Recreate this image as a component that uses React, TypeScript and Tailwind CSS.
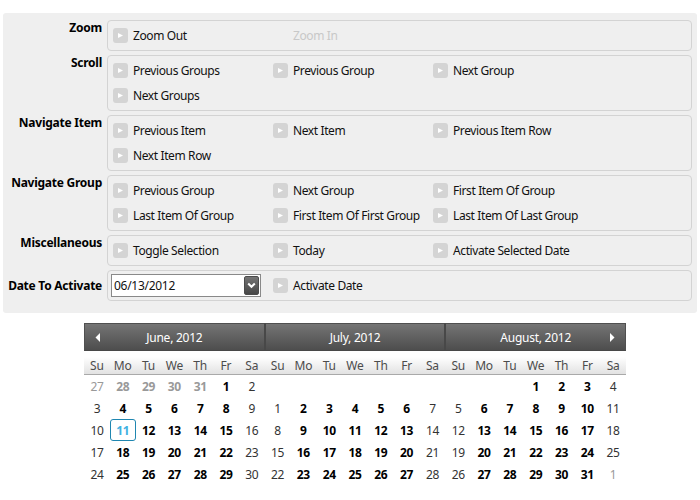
import React from 'react';

type Command = { label: string; disabled?: boolean };
type CommandGroup = { title: string; commands: Command[]; datePicker?: boolean };

const groups: CommandGroup[] = [
  { title: 'Zoom', commands: [{ label: 'Zoom Out' }, { label: 'Zoom In', disabled: true }] },
  { title: 'Scroll', commands: [{ label: 'Previous Groups' }, { label: 'Previous Group' }, { label: 'Next Group' }, { label: 'Next Groups' }] },
  { title: 'Navigate Item', commands: [{ label: 'Previous Item' }, { label: 'Next Item' }, { label: 'Previous Item Row' }, { label: 'Next Item Row' }] },
  {
    title: 'Navigate Group',
    commands: [
      { label: 'Previous Group' },
      { label: 'Next Group' },
      { label: 'First Item Of Group' },
      { label: 'Last Item Of Group' },
      { label: 'First Item Of First Group' },
      { label: 'Last Item Of Last Group' },
    ],
  },
  { title: 'Miscellaneous', commands: [{ label: 'Toggle Selection' }, { label: 'Today' }, { label: 'Activate Selected Date' }] },
  { title: 'Date To Activate', commands: [{ label: 'Activate Date' }], datePicker: true },
];

const weekdays = ['Su', 'Mo', 'Tu', 'We', 'Th', 'Fr', 'Sa'];

// `first` is the number shown in the top-left cell, counted from the 1st of the month.
const months = [
  { name: 'June, 2012', first: -4, length: 30, previousLength: 31, leading: true, trailing: false },
  { name: 'July, 2012', first: -6, length: 28, previousLength: 30, leading: false, trailing: false },
  { name: 'August, 2012', first: -2, length: 31, previousLength: 31, leading: false, trailing: true },
];

function PlayButton() {
  return (
    <span className="flex h-[15px] w-[15px] shrink-0 items-center justify-center rounded-[3px] bg-[#d4d4d4]">
      <svg width="15" height="15" viewBox="0 0 15 15">
        <path d="M5 5 L10 7.5 L5 10 Z" fill="#fff" />
      </svg>
    </span>
  );
}

function CommandItem({ command }: { command: Command }) {
  return (
    <div className="flex h-[25px] w-40 items-center gap-[5px] whitespace-nowrap leading-[17px] tracking-[-0.39px]">
      {command.disabled ? <span className="w-[15px] shrink-0" /> : <PlayButton />}
      <span className={command.disabled ? 'text-[#c8c8c8]' : 'text-[#111]'}>{command.label}</span>
    </div>
  );
}

function DatePicker() {
  return (
    <div className="-ml-0.5 mr-3 mt-px flex h-[23px] w-[150px] items-center justify-between border border-[#898989] bg-white pl-0.5 pr-px">
      <span className="leading-[17px] tracking-[-0.28px] text-[#111]">06/13/2012</span>
      <span className="flex h-[19px] w-[15px] items-center justify-center rounded-[2px] border border-[#4b4b4b] bg-linear-to-b from-[#747474] to-[#474747]">
        <svg width="9" height="7" viewBox="0 0 9 7" className="shrink-0">
          <path d="M1.2 1.5 L4.5 4.8 L7.8 1.5" fill="none" stroke="#fff" strokeWidth="2" />
        </svg>
      </span>
    </div>
  );
}

function dayFor(month: (typeof months)[number], index: number) {
  const n = month.first + index;
  if (n < 1) return month.leading ? { text: n + month.previousLength, faded: true } : null;
  if (n > month.length) return month.trailing ? { text: n - month.length, faded: true } : null;
  return { text: n, faded: false };
}

function Month({ month, index }: { month: (typeof months)[number]; index: number }) {
  return (
    <div className="min-w-0 flex-1">
      <div
        className={`grid h-7 grid-cols-[28px_1fr_28px] items-center border-y border-t-[#505050] border-b-[#484848] bg-linear-to-b from-[#757575] to-[#4d4d4d] text-white ${
          index === 0 ? 'border-l border-l-[#505050]' : 'border-l border-l-[#484848]'
        } ${index === 2 ? 'border-r border-r-[#505050]' : 'border-r border-r-[#484848]'}`}
      >
        <span className="flex justify-center">
          {index === 0 && (
            <svg width="6" height="9" viewBox="0 0 6 9" className="-ml-0.5">
              <path d="M5 0 V9 L0.5 4.5 Z" fill="#fff" />
            </svg>
          )}
        </span>
        <span className="pt-px text-center tracking-[-0.25px]">{month.name}</span>
        <span className="flex justify-center">
          {index === 2 && (
            <svg width="6" height="9" viewBox="0 0 6 9" className="-mr-0.5">
              <path d="M1 0 V9 L5.5 4.5 Z" fill="#fff" />
            </svg>
          )}
        </span>
      </div>
      <div className={`mt-1.5 grid h-[18px] grid-cols-7 items-center border-b border-[#a9a9a9] bg-linear-to-b from-white to-[#e2e2e2] text-center text-[#4c4c4c] ${index < 2 ? 'shadow-[1px_0_0_#fff]' : ''}`}>
        {weekdays.map((d) => (
          <span key={d} className="leading-[18px] tracking-[-0.2px]">{d}</span>
        ))}
      </div>
      <div className="grid auto-rows-[22px] grid-cols-7 text-center leading-[23px]">
        {Array.from({ length: 35 }, (_, i) => {
          const day = dayFor(month, i);
          if (!day) return <span key={i} />;
          const workday = i % 7 !== 0 && i % 7 !== 6;
          const selected = index === 0 && day.text === 11;
          const tone = selected ? 'text-[#41b1e1]' : day.faded ? 'text-[#999]' : workday ? 'text-black' : 'text-[#333]';
          return (
            <span
              key={i}
              className={`${tone} ${workday ? 'font-bold' : ''} ${selected ? 'rounded-[3px] border border-[#1f86b0] leading-[21px]' : ''}`}
            >
              {day.text}
            </span>
          );
        })}
      </div>
    </div>
  );
}

export default function App() {
  return (
    <div className="h-[500px] w-[700px] overflow-hidden bg-white px-[3px] pt-[13px] font-['Noto_Sans','Open_Sans',sans-serif] text-[12px] leading-4 tracking-[-0.35px]">
      <div className="flex h-[300px] flex-col gap-1 rounded-[3px] bg-[#efefef] pl-1 pr-[5px] pt-[7px]">
        {groups.map((g) => (
          <div key={g.title} className="flex gap-[5px]">
            <div className={`w-[95px] shrink-0 whitespace-nowrap text-right font-bold leading-[17px] tracking-[-0.25px] text-black ${g.datePicker ? 'self-center' : '-mt-px'}`}>
              {g.title}
            </div>
            <div className="flex flex-1 flex-wrap rounded-[4px] border border-[#d3d3d3] py-0.5 pl-[5px] pr-[60px]">
              {g.datePicker && <DatePicker />}
              {g.commands.map((c) => (
                <CommandItem key={c.label} command={c} />
              ))}
            </div>
          </div>
        ))}
      </div>
      <div className="ml-[81px] mt-2.5 flex w-[542px]">
        {months.map((m, i) => (
          <Month key={m.name} month={m} index={i} />
        ))}
      </div>
    </div>
  );
}
